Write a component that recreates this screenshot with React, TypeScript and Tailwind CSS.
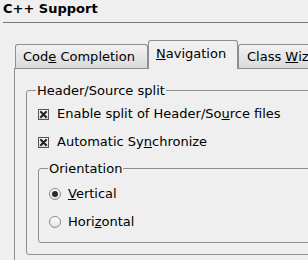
const FONT = "font-['DejaVu_Sans','Liberation_Sans',sans-serif]";

function CheckBox() {
  return (
    <svg width="11" height="11" viewBox="0 0 11 11" className="shrink-0" aria-hidden>
      <defs>
        <linearGradient id="cbg" x1="0" y1="0" x2="0" y2="1">
          <stop offset="0" stopColor="#ffffff" />
          <stop offset="1" stopColor="#dcdcdc" />
        </linearGradient>
      </defs>
      <rect x="0.5" y="0.5" width="10" height="10" fill="url(#cbg)" stroke="#555" />
      <path d="M3 3 L8 8 M8 3 L3 8" stroke="#222" strokeWidth="2" strokeLinecap="square" />
    </svg>
  );
}

function Radio({ checked }: { checked?: boolean }) {
  return (
    <span className="flex h-[12px] w-[12px] shrink-0 items-center justify-center rounded-full border border-[#8a8a8a] bg-gradient-to-b from-white to-[#e2e2e2]">
      {checked && <span className="h-[6px] w-[6px] rounded-full bg-[#2a2a2a]" />}
    </span>
  );
}

function Group({ label, children, className = "" }: { label: string; children: React.ReactNode; className?: string }) {
  return (
    <fieldset className={`rounded-[3px] border border-[#8e8e8e] ${className}`}>
      <legend className="ml-[9px] px-px leading-[15px]">{label}</legend>
      {children}
    </fieldset>
  );
}

export default function App() {
  return (
    <div className={`h-[260px] w-[308px] overflow-hidden bg-[#efefef] text-[13px] text-black ${FONT}`}>
      <div className="pl-[3px] pt-px font-bold leading-[15px]">C++ Support</div>
      <div className="ml-[3px] mt-[6px] h-px bg-[#7a7a7a]" />

      <div className="ml-[14px] mt-[17px] w-[360px]">
        {/* tab bar */}
        <div className="relative z-10 flex h-[29px] items-end">
          <div className="mb-px ml-px flex h-[24px] w-[133px] items-center rounded-t-[3px] border border-b-0 border-[#8e8e8e] bg-gradient-to-b from-[#f2f2f2] to-[#dadada] pl-[7px] pt-px">
            Cod<u>e</u>&nbsp;Completion
          </div>
          <div className="flex h-[29px] w-[90px] items-center rounded-t-[3px] border border-b-0 border-[#8e8e8e] bg-[#efefef] pb-[2px] pl-[7px]">
            <u>N</u>avigation
          </div>
          <div className="mb-px flex h-[24px] w-[100px] items-center rounded-t-[3px] border border-b-0 border-[#8e8e8e] bg-gradient-to-b from-[#f2f2f2] to-[#dadada] pl-[8px] pt-px">
            Class&nbsp;<u>W</u>izard
          </div>
        </div>

        {/* tab pane */}
        <div className="-mt-px h-[200px] border-l border-t border-[#8e8e8e] pl-[11px] pt-[14px]">
          <Group label="Header/Source split" className="pb-[11px]">
            <div className="pl-[11px] pt-[2px]">
              <div className="flex h-[28px] items-center gap-[8px]">
                <CheckBox />
                <span>
                  Enable split of Header/So<u>u</u>rce files
                </span>
              </div>
              <div className="flex h-[28px] items-center gap-[8px]">
                <CheckBox />
                <span>
                  Automatic Sy<u>n</u>chronize
                </span>
              </div>
            </div>
            <Group label="Orientation" className="ml-[11px] mt-[5px] pb-[6px]">
              <div className="pl-[10px] pt-[4px]">
                <div className="flex h-[28px] items-center gap-[7px]">
                  <Radio checked />
                  <span>
                    <u>V</u>ertical
                  </span>
                </div>
                <div className="flex h-[28px] items-center gap-[7px]">
                  <Radio />
                  <span>
                    Hori<u>z</u>ontal
                  </span>
                </div>
              </div>
            </Group>
          </Group>
        </div>
      </div>
    </div>
  );
}
